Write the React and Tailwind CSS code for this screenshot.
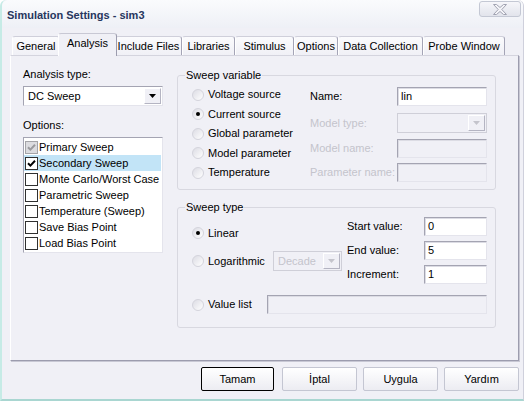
import React from 'react';

const BG = 'bg-[#f0f0f6]';

const Radio = ({ checked }) => (
  <span className="w-[12px] h-[12px] rounded-full border border-[#d4d4dc] bg-gradient-to-br from-[#dcdce4] to-white flex items-center justify-center shrink-0">
    {checked && <span className="w-[4px] h-[4px] rounded-full bg-black" />}
  </span>
);

const Check = ({ checked, disabled }) => (
  <span
    className={`w-[13px] h-[13px] border flex items-center justify-center shrink-0 ${
      disabled ? 'border-[#a4a4a8] bg-[#dcdce0]' : 'border-[#303030] bg-white'
    }`}
  >
    {checked && (
      <svg width="9" height="9" viewBox="0 0 9 9">
        <path d="M1 4.2 L3.4 6.6 L8 1.8" fill="none" stroke={disabled ? '#9a9a9e' : '#000'} strokeWidth="2" />
      </svg>
    )}
  </span>
);

const Field = ({ value, className = '', disabled }) => (
  <div
    className={`h-[19px] border border-t-[#a4a4b2] border-l-[#a4a4b2] border-b-[#e4e4ec] border-r-[#e4e4ec] shadow-[inset_1px_1px_0_#dcdce4] flex items-center pl-[3px] ${
      disabled ? BG : 'bg-white'
    } ${className}`}
  >
    {value}
  </div>
);

const Arrow = ({ disabled }) => (
  <div
    className={`w-[17px] h-full border border-t-white border-l-white border-b-[#b4b4c2] border-r-[#b4b4c2] ${BG} flex items-center justify-center`}
  >
    <svg width="7" height="4" viewBox="0 0 7 4">
      <path d="M0 0 H7 L3.5 4 Z" fill={disabled ? '#c4c4cc' : '#000'} />
    </svg>
  </div>
);

const DisabledSelect = ({ text, className = '' }) => (
  <div
    className={`h-[20px] border border-[#cfcfd8] ${BG} flex items-center justify-between p-[1px] ${className}`}
  >
    <span className="pl-[3px] text-[#c4c4cc]">{text}</span>
    <Arrow disabled />
  </div>
);

const Group = ({ title, className = '', children }) => (
  <div className={`relative border border-[#d8d8e0] rounded-[3px] ${className}`}>
    <span className={`absolute left-[7px] -top-[7px] px-[1px] leading-[13px] ${BG}`}>{title}</span>
    {children}
  </div>
);

const tabs = [
  ['General', 48],
  ['Analysis', 55],
  ['Include Files', 67],
  ['Libraries', 53],
  ['Stimulus', 59],
  ['Options', 44],
  ['Data Collection', 85],
  ['Probe Window', 82],
];

const options = [
  ['Primary Sweep', true, true],
  ['Secondary Sweep', true, false],
  ['Monte Carlo/Worst Case', false, false],
  ['Parametric Sweep', false, false],
  ['Temperature (Sweep)', false, false],
  ['Save Bias Point', false, false],
  ['Load Bias Point', false, false],
];

const Button = ({ label, w, isDefault }) => (
  <div
    className={`${w} h-[24px] rounded-[2px] flex items-center justify-center bg-gradient-to-b from-white to-[#ececf2] border ${
      isDefault ? 'border-black' : 'border-[#c4c6d2]'
    }`}
  >
    {label}
  </div>
);

export default function App() {
  return (
    <div className="w-[528px] h-[402px] bg-white font-['Liberation_Sans',Arial,sans-serif] text-[11px] leading-[13px] text-black">
      <div className={`w-[524px] h-[401px] ${BG} border-l-2 border-l-[#c6ebe6] border-r border-r-[#cfd0dc] border-b-2 border-b-[#a9d6d1] rounded-t-[6px] flex flex-col`}>
        {/* title bar */}
        <div className="h-[28px] shrink-0 flex items-start justify-between bg-gradient-to-b from-[#fafbfd] to-[#eef0f6] rounded-t-[6px]">
          <span className="pl-[5px] pt-[9px] font-bold text-[#27365e]">Simulation Settings - sim3</span>
          <div className="mt-[1px] mr-[2px] w-[42px] h-[16px] rounded-[3px] border border-[#c4c8d4] bg-gradient-to-b from-[#f6f6fa] to-[#e2e4ec] flex items-center justify-center">
            <svg width="14" height="11" viewBox="0 0 14 11">
              <path
                d="M0.5 0.5 H3.5 L7 3.5 L10.5 0.5 H13.5 L8.8 5.5 L13.5 10.5 H10.5 L7 7.5 L3.5 10.5 H0.5 L5.2 5.5 Z"
                fill="#f4f4f8"
                stroke="#a2a4b2"
                strokeWidth="1"
              />
            </svg>
          </div>
        </div>

        {/* tabs */}
        <div className="mt-[5px] h-[22px] ml-[10px] flex items-end shrink-0">
          {tabs.map(([name, w]) =>
            name === 'Analysis' ? (
              <div
                key={name}
                style={{ width: w + 4 }}
                className={`relative z-10 -mx-[2px] h-[23px] -mb-[1px] ${BG} border border-b-0 border-l-white border-t-[#c8c8d4] border-r-[#9c9cae] rounded-t-[3px] flex justify-center pt-[3px]`}
              >
                {name}
              </div>
            ) : (
              <div
                key={name}
                style={{ width: w }}
                className="h-[19px] bg-gradient-to-b from-[#fbfbfd] to-[#f0f0f6] border border-b-0 border-l-white border-t-[#cfcfda] border-r-[#a4a4b6] rounded-t-[3px] flex justify-center pt-[3px]"
              >
                {name}
              </div>
            )
          )}
        </div>

        {/* panel */}
        <div className={`ml-[8px] w-[509px] h-[306px] shrink-0 ${BG} border border-t-[#d4d4de] border-l-white border-r-[#9c9cae] border-b-[#9c9cae] shadow-[1px_1px_0_#c8c8d4] flex pl-[12px]`}>
          {/* left column */}
          <div className="w-[140px] pt-[12px] flex flex-col">
            <span>Analysis type:</span>
            <div className="mt-[5px] h-[20px] bg-white border border-t-[#a4a4b2] border-l-[#a4a4b2] border-b-[#e4e4ec] border-r-[#e4e4ec] flex items-center justify-between p-[1px]">
              <span className="pl-[3px]">DC Sweep</span>
              <Arrow />
            </div>
            <span className="mt-[13px]">Options:</span>
            <div className="mt-[5px] h-[116px] bg-white border border-t-[#a4a4b2] border-l-[#a4a4b2] border-b-[#e4e4ec] border-r-[#e4e4ec] pt-[1px] flex flex-col">
              {options.map(([label, checked, disabled], i) => (
                <div
                  key={label}
                  className={`h-[16px] flex items-center gap-[1px] pl-[1px] mr-[1px] ${i === 1 ? 'bg-[#c2e4f7]' : ''}`}
                >
                  <Check checked={checked} disabled={disabled} />
                  <span>{label}</span>
                </div>
              ))}
            </div>
          </div>

          {/* right column */}
          <div className="ml-[14px] w-[319px] pt-[19px] flex flex-col">
            <Group title="Sweep variable" className="h-[115px] flex">
              <div className="pl-[14px] pt-[9px] flex flex-col">
                {[
                  ['Voltage source', false],
                  ['Current source', true],
                  ['Global parameter', false],
                  ['Model parameter', false],
                  ['Temperature', false],
                ].map(([label, on]) => (
                  <div key={label} className="h-[19.5px] flex items-center gap-[4px]">
                    <Radio checked={on} />
                    <span>{label}</span>
                  </div>
                ))}
              </div>
              <div className="ml-auto pr-[8px] pt-[11px] flex flex-col">
                <div className="flex items-center">
                  <span className="w-[87px]">Name:</span>
                  <Field value="lin" className="w-[90px]" />
                </div>
                <div className="mt-[7px] flex items-center text-[#c4c4cc]">
                  <span className="w-[87px]">Model type:</span>
                  <DisabledSelect text="" className="w-[90px] h-[19px]" />
                </div>
                <div className="mt-[6px] flex items-center text-[#c4c4cc]">
                  <span className="w-[87px]">Model name:</span>
                  <Field disabled className="w-[90px] border-[#cfcfd8]" />
                </div>
                <div className="mt-[5px] flex items-center text-[#c4c4cc]">
                  <span className="w-[87px]">Parameter name:</span>
                  <Field disabled className="w-[90px]" />
                </div>
              </div>
            </Group>

            <Group title="Sweep type" className="mt-[17px] h-[121px] flex flex-col">
              <div className="h-[87px] flex">
                <div className="pl-[14px] pt-[15px] flex flex-col">
                  <div className="h-[20px] flex items-center gap-[4px]">
                    <Radio checked />
                    <span>Linear</span>
                  </div>
                  <div className="mt-[8px] h-[20px] flex items-center gap-[4px]">
                    <Radio />
                    <span className="w-[61px]">Logarithmic</span>
                    <DisabledSelect text="Decade" className="w-[69px]" />
                  </div>
                </div>
                <div className="ml-auto pr-[8px] pt-[9px] flex flex-col">
                  {[
                    ['Start value:', '0'],
                    ['End value:', '5'],
                    ['Increment:', '1'],
                  ].map(([label, v], i) => (
                    <div key={label} className={`flex items-center ${i ? 'mt-[5px]' : ''}`}>
                      <span className="w-[77px]">{label}</span>
                      <Field value={v} className="w-[63px]" />
                    </div>
                  ))}
                </div>
              </div>
              <div className="h-[19px] pl-[14px] pr-[8px] flex items-center gap-[4px]">
                <Radio />
                <span className="w-[55px]">Value list</span>
                <Field disabled className="flex-1" />
              </div>
            </Group>
          </div>
        </div>

        {/* buttons */}
        <div className="mt-[6px] pr-[4px] flex justify-end">
          <Button label="Tamam" w="w-[73px]" isDefault />
          <div className="w-[8px]" />
          <Button label="İptal" w="w-[75px]" />
          <div className="w-[6px]" />
          <Button label="Uygula" w="w-[75px]" />
          <div className="w-[6px]" />
          <Button label="Yardım" w="w-[75px]" />
        </div>
      </div>
    </div>
  );
}
